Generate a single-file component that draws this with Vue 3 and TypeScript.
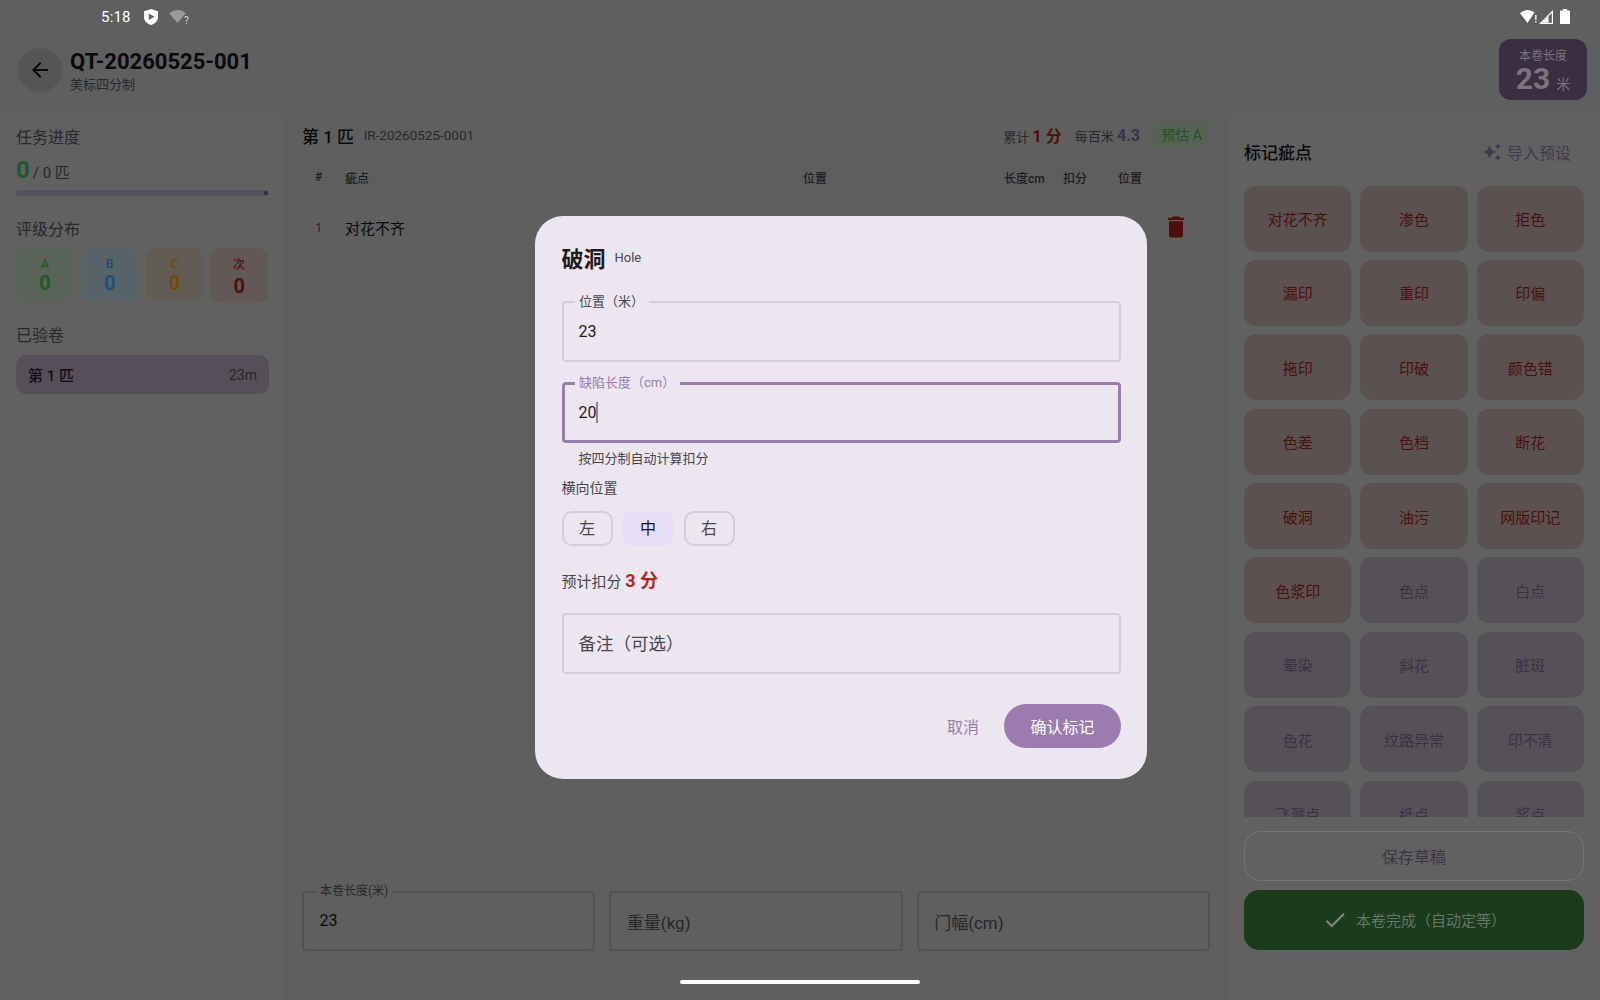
<script setup lang="ts">
interface Defect {
  name: string
  severe: boolean
}

const names: string[] = [
  '对花不齐', '渗色', '拒色', '漏印', '重印', '印偏', '拖印', '印破', '颜色错',
  '色差', '色档', '断花', '破洞', '油污', '网版印记', '色浆印', '色点', '白点',
  '晕染', '斜花', '脏斑', '色花', '纹路异常', '印不清', '飞溅点', '纸点', '浆点',
]
const defects: Defect[] = names.map((name, i) => ({ name, severe: i < 16 }))

const grades = [
  { label: 'A', cls: 'a' },
  { label: 'B', cls: 'b' },
  { label: 'C', cls: 'c' },
  { label: '次', cls: 'd' },
]
const sides = ['左', '中', '右']
</script>

<template>
  <div class="screen">
    <div class="status">
      <div class="status-left">
        <span class="time">5:18</span>
        <svg class="shield" viewBox="0 0 14 16"><path d="M7 0L14 2.200V8c0 3.800-3 6.800-7 8-4-1.200-7-4.200-7-8V2.200z" fill="#fff" /><path d="M4.800 4.500v6.600L10.500 7.800z" fill="#636363" /></svg>
        <span class="wifi-q">
          <svg viewBox="0 0 18 14"><path d="M0 3.500C2.400 1.300 5.500 0 9 0s6.600 1.300 9 3.500L9 14z" fill="#9a9a9a" /></svg>
          <i>?</i>
        </span>
      </div>
      <div class="status-right">
        <svg class="wifi" viewBox="0 0 17 13"><path d="M0 3.200C2.100 1.200 4.900 0 7.500 0c2.600 0 5 .9 7 2.400L7.500 13z" fill="#fff" /><path d="M15.200 5h1.300v5h-1.300zM15.200 11h1.300v1.500h-1.300z" fill="#fff" /></svg>
        <svg class="signal" viewBox="0 0 14 14"><path d="M14 0v14H0zM12.800 3L3 12.800h9.800z" fill="#fff" /><path d="M9.500 6.300v6.500H3z" fill="#fff" /></svg>
        <svg class="battery" viewBox="0 0 10 15"><path d="M3 0h4v1.500h2c.6 0 1 .4 1 1V14c0 .6-.4 1-1 1H1c-.6 0-1-.4-1-1V2.500c0-.6.4-1 1-1h2z" fill="#fff" /></svg>
      </div>
    </div>

    <header class="header">
      <button class="back">
        <svg viewBox="0 0 24 24"><path d="M20 11H7.830l5.590-5.590L12 4l-8 8 8 8 1.410-1.410L7.830 13H20v-2z" /></svg>
      </button>
      <div class="titles">
        <div class="title">QT-20260525-001</div>
        <div class="subtitle">美标四分制</div>
      </div>
      <div class="length-badge">
        <div class="length-label">本卷长度</div>
        <div class="length-value"><b>23</b><span>米</span></div>
      </div>
    </header>

    <main class="body">
      <aside class="left">
        <div class="section-title">任务进度</div>
        <div class="progress-text"><b>0</b><span>/ 0 匹</span></div>
        <div class="track"><i></i></div>
        <div class="section-title grade-title">评级分布</div>
        <div class="grades">
          <div v-for="g in grades" :key="g.label" class="grade" :class="g.cls">
            <span>{{ g.label }}</span>
            <b>0</b>
          </div>
        </div>
        <div class="section-title roll-title">已验卷</div>
        <div class="roll">
          <b>第 1 匹</b>
          <span>23m</span>
        </div>
      </aside>

      <section class="center">
        <div class="roll-head">
          <b class="roll-name">第 1 匹</b>
          <span class="roll-id">IR-20260525-0001</span>
          <div class="summary">
            <span>累计 <b class="red">1 分</b></span>
            <span>每百米 <b class="purple">4.3</b></span>
            <span class="pill">预估 A</span>
          </div>
        </div>
        <div class="row thead">
          <span class="c-no">#</span>
          <span class="c-name">疵点</span>
          <span class="c-pos">位置</span>
          <span class="c-len">长度cm</span>
          <span class="c-score">扣分</span>
          <span class="c-side">位置</span>
          <span class="c-del"></span>
        </div>
        <div class="row tbody">
          <span class="c-no">1</span>
          <span class="c-name">对花不齐</span>
          <span class="c-pos"></span>
          <span class="c-len"></span>
          <span class="c-score"></span>
          <span class="c-side"></span>
          <span class="c-del">
            <svg viewBox="0 0 24 24"><path d="M6 19c0 1.100.9 2 2 2h8c1.100 0 2-.9 2-2V7H6v12zM19 4h-3.500l-1-1h-5l-1 1H5v2h14V4z" /></svg>
          </span>
        </div>
        <div class="spacer"></div>
        <div class="bottom-fields">
          <div class="dim-field">
            <label>本卷长度(米)</label>
            <span class="dim-value">23</span>
          </div>
          <div class="dim-field"><span class="dim-hint">重量(kg)</span></div>
          <div class="dim-field"><span class="dim-hint">门幅(cm)</span></div>
        </div>
      </section>

      <aside class="right">
        <div class="right-head">
          <b>标记疵点</b>
          <span class="preset">
            <svg viewBox="0 0 24 24"><path d="M19 9l1.250-2.750L23 5l-2.750-1.250L19 1l-1.250 2.750L15 5l2.750 1.250L19 9zm-7.500.5L9 4 6.500 9.500 1 12l5.500 2.500L9 20l2.500-5.500L17 12l-5.500-2.500zM19 15l-1.250 2.750L15 19l2.750 1.250L19 23l1.250-2.750L23 19l-2.750-1.250L19 15z" /></svg>
            导入预设
          </span>
        </div>
        <div class="defects">
          <div v-for="d in defects" :key="d.name" class="defect" :class="{ severe: d.severe }">{{ d.name }}</div>
        </div>
        <button class="save">保存草稿</button>
        <button class="finish">
          <svg viewBox="0 0 24 24"><path d="M9 16.170L4.830 12l-1.420 1.410L9 19 21 7l-1.410-1.410z" /></svg>
          本卷完成（自动定等）
        </button>
      </aside>
    </main>

    <div class="home"></div>

    <div class="overlay">
      <div class="dialog">
        <div class="dialog-title"><b>破洞</b><span>Hole</span></div>
        <div class="field first">
          <label>位置（米）</label>
          <span>23</span>
        </div>
        <div class="field focused">
          <label>缺陷长度（cm）</label>
          <span>20<i class="caret"></i></span>
        </div>
        <div class="helper">按四分制自动计算扣分</div>
        <div class="side-label">横向位置</div>
        <div class="sides">
          <div v-for="s in sides" :key="s" class="side" :class="{ active: s === '中' }">{{ s }}</div>
        </div>
        <div class="estimate">预计扣分 <b>3 分</b></div>
        <div class="field note"><span>备注（可选）</span></div>
        <div class="actions">
          <button class="cancel">取消</button>
          <button class="confirm">确认标记</button>
        </div>
      </div>
    </div>
  </div>
</template>

<style scoped>
.screen {
  position: relative;
  width: 1600px;
  height: 1000px;
  overflow: hidden;
  display: flex;
  flex-direction: column;
  background: #5f5f60;
  color: #0a090b;
  font-family: Roboto, "Noto Sans CJK SC", sans-serif;
}

.status {
  height: 36px;
  flex: none;
  display: flex;
  justify-content: space-between;
  align-items: center;
  padding: 0 30px 3px 101px;
  color: #fff;
  box-sizing: border-box;
}

.status-left,
.status-right {
  display: flex;
  align-items: center;
}

.time {
  font-size: 15px;
  letter-spacing: 0.2px;
}

.shield {
  width: 14px;
  height: 16px;
  margin-left: 13px;
}

.wifi-q {
  position: relative;
  margin-left: 11px;
  display: flex;
}

.wifi-q svg {
  width: 17px;
  height: 13px;
}

.wifi-q i {
  position: absolute;
  right: -3px;
  bottom: -3px;
  font-size: 10px;
  font-style: normal;
  color: #d8d8d8;
}

.wifi {
  width: 17px;
  height: 13px;
}

.signal {
  width: 14px;
  height: 14px;
  margin-left: 2px;
}

.battery {
  width: 10px;
  height: 15px;
  margin-left: 7px;
}

.header {
  height: 76px;
  flex: none;
  display: flex;
  align-items: flex-start;
  padding: 0 13px 0 18px;
}

.back {
  width: 44px;
  height: 44px;
  border: none;
  border-radius: 50%;
  background: #555556;
  padding: 10px;
  margin-top: 12px;
}

.back svg {
  display: block;
  fill: #0a090b;
}

.titles {
  margin-left: 8px;
  flex: 1;
  margin-top: 13px;
}

.title {
  font-size: 22px;
  line-height: 26px;
  font-weight: 700;
}

.subtitle {
  font-size: 13px;
  line-height: 20px;
  color: #28272b;
}

.length-badge {
  width: 88px;
  height: 61px;
  margin-top: 3px;
  border-radius: 12px;
  background: #3b2d42;
  display: flex;
  flex-direction: column;
  align-items: center;
  padding-top: 9px;
  box-sizing: border-box;
  color: #7b747f;
}

.length-label {
  font-size: 12px;
  line-height: 16px;
}

.length-value {
  display: flex;
  align-items: baseline;
  line-height: 30px;
}

.length-value b {
  font-size: 30px;
}

.length-value span {
  font-size: 14px;
  margin-left: 6px;
}

.body {
  flex: 1;
  display: flex;
  min-height: 0;
}

.left {
  width: 284px;
  flex: none;
  box-sizing: border-box;
  padding: 16px 16px 0;
  background: #616162;
  border-radius: 0 12px 0 0;
}

.section-title {
  font-size: 16px;
  line-height: 20px;
  color: #28272b;
}

.progress-text {
  margin-top: 8px;
  height: 28px;
  display: flex;
  align-items: baseline;
  color: #28272b;
  font-size: 15px;
}

.progress-text b {
  font-size: 24px;
  line-height: 28px;
  color: #1e5a22;
}

.progress-text span {
  margin-left: 3px;
}

.track {
  position: relative;
  width: 253px;
  height: 6px;
  margin-top: 6px;
  border-radius: 3px;
  background: #564f5e;
}

.track i {
  position: absolute;
  right: 1px;
  top: 1px;
  width: 4px;
  height: 4px;
  border-radius: 50%;
  background: #352a40;
}

.grade-title {
  margin-top: 24px;
}

.grades {
  display: flex;
  align-items: flex-start;
  gap: 7px;
  margin-top: 8px;
}

.grade {
  width: 58px;
  height: 53px;
  border-radius: 10px;
  display: flex;
  flex-direction: column;
  align-items: center;
  box-sizing: border-box;
  padding-top: 8px;
}

.grade span {
  font-size: 12px;
  line-height: 16px;
  font-weight: 500;
}

.grade b {
  font-size: 20px;
  line-height: 22px;
}

.grade.a {
  background: #5a635a;
  color: #1e5a22;
}

.grade.b {
  background: #586269;
  color: #18507e;
}

.grade.c {
  background: #635c54;
  color: #784904;
}

.grade.d {
  height: 55px;
  background: #625856;
  color: #50100d;
}

.grade.d span {
  line-height: 18px;
}

.grade.d b {
  line-height: 24px;
}

.roll-title {
  margin-top: 23px;
}

.roll {
  display: flex;
  justify-content: space-between;
  align-items: center;
  width: 253px;
  height: 39px;
  margin-top: 9px;
  box-sizing: border-box;
  padding: 0 12px;
  border-radius: 10px;
  background: #564e58;
}

.roll b {
  font-size: 15px;
  font-weight: 500;
  color: #120c18;
}

.roll span {
  font-size: 14px;
  color: #28272b;
}

.center {
  flex: 1;
  min-width: 0;
  display: flex;
  flex-direction: column;
  padding: 10px 18px 0 18px;
  background: #5f5f60;
}

.roll-head {
  height: 26px;
  display: flex;
  align-items: center;
}

.roll-name {
  font-size: 17px;
  font-weight: 500;
}

.roll-id {
  margin-left: 9.500px;
  font-size: 13.500px;
  color: #28272b;
}

.summary {
  margin-left: auto;
  display: flex;
  align-items: center;
  gap: 13px;
  font-size: 13px;
  color: #28272b;
}

.summary b {
  font-size: 16px;
  font-weight: 700;
}

.red {
  color: #4e0f0c;
}

.purple {
  color: #3d304d;
}

.pill {
  width: 57px;
  height: 26px;
  border-radius: 7px;
  background: #576257;
  color: #1d5421;
  font-size: 14px;
  line-height: 26px;
  text-align: center;
}

.row {
  display: flex;
  align-items: center;
}

.thead {
  height: 24px;
  margin-top: 17px;
  border-radius: 6px;
  font-size: 12px;
  font-weight: 500;
  color: #1c1b1f;
  background: #5e5e5f;
}

.tbody {
  height: 60px;
  margin-top: 8px;
  font-size: 15px;
}

.c-no {
  width: 43px;
  padding-left: 13px;
  box-sizing: border-box;
}

.tbody .c-no {
  font-size: 13px;
  color: #28272b;
}

.c-name {
  width: 458px;
}

.c-pos {
  width: 201px;
}

.c-len {
  width: 59px;
}

.c-score {
  width: 55px;
}

.c-side {
  width: 44px;
}

.c-del svg {
  display: block;
  width: 28px;
  height: 28px;
  fill: #4e0f0c;
}

.spacer {
  flex: 1;
}

.bottom-fields {
  display: flex;
  gap: 14px;
  margin-bottom: 49px;
}

.dim-field {
  position: relative;
  flex: 1;
  height: 60px;
  box-sizing: border-box;
  border: 2px solid #525253;
  border-radius: 4px;
  display: flex;
  align-items: center;
  padding: 0 15.500px;
}

.dim-field label {
  position: absolute;
  left: 12px;
  top: -10px;
  padding: 0 4px;
  font-size: 12px;
  line-height: 16px;
  background: #5f5f60;
  color: #28272b;
}

.dim-value {
  font-size: 16px;
  margin-top: -2px;
}

.dim-hint {
  font-size: 17px;
  color: #28272b;
}

.right {
  width: 372px;
  flex: none;
  box-sizing: border-box;
  padding: 0 16px;
  background: #616162;
  border-radius: 12px 0 0 0;
  display: flex;
  flex-direction: column;
}

.right-head {
  height: 73.500px;
  flex: none;
  display: flex;
  justify-content: space-between;
  align-items: center;
  padding: 6px 13px 0 0;
  box-sizing: border-box;
}

.right-head b {
  font-size: 17px;
  font-weight: 500;
}

.preset {
  display: flex;
  align-items: center;
  gap: 5px;
  font-size: 16px;
  color: #43394d;
}

.preset svg {
  width: 20px;
  height: 20px;
  fill: #43394d;
}

.defects {
  height: 631.500px;
  overflow: hidden;
  display: grid;
  grid-template-columns: repeat(3, 1fr);
  grid-auto-rows: 66px;
  gap: 8.400px 9px;
  flex: none;
}

.defect {
  border-radius: 12px;
  background: #565159;
  color: #3a3143;
  font-size: 15px;
  display: flex;
  align-items: center;
  justify-content: center;
}

.defect.severe {
  background: #5b5150;
  color: #4a100d;
}

.save {
  height: 50px;
  margin-top: 14px;
  flex: none;
  border: 1.500px solid #757577;
  border-radius: 16px;
  background: transparent;
  font: inherit;
  font-size: 16px;
  color: #3e3344;
}

.finish {
  height: 59.500px;
  margin-top: 9px;
  flex: none;
  border: none;
  border-radius: 15px;
  background: #1a3b1c;
  color: #687569;
  font: inherit;
  font-size: 15px;
  display: flex;
  align-items: center;
  justify-content: center;
  gap: 8px;
}

.finish svg {
  width: 26px;
  height: 26px;
  fill: #7c877d;
}

.home {
  position: absolute;
  left: 680px;
  bottom: 16px;
  width: 240px;
  height: 4px;
  border-radius: 2px;
  background: #fff;
}

.overlay {
  position: absolute;
  inset: 0;
  display: flex;
  justify-content: flex-start;
  align-items: flex-start;
  padding: 216px 0 0 535px;
  box-sizing: border-box;
}

.dialog {
  width: 612px;
  height: 563px;
  box-sizing: border-box;
  padding: 21px 26px 0 26.500px;
  border-radius: 28px;
  background: #ece6f0;
  color: #1d1b20;
  display: flex;
  flex-direction: column;
}

.dialog-title {
  display: flex;
  align-items: center;
  height: 40px;
}

.dialog-title b {
  font-size: 22px;
  font-weight: 700;
}

.dialog-title span {
  margin: 1px 0 0 9px;
  font-size: 13px;
  color: #49454f;
}

.field {
  position: relative;
  height: 61px;
  margin-top: 20px;
  box-sizing: border-box;
  border: 2px solid #d4ced9;
  border-radius: 4px;
  padding: 0 15px;
  display: flex;
  align-items: center;
  font-size: 16px;
}

.field.first {
  margin-top: 24px;
}

.field label {
  position: absolute;
  left: 11px;
  top: -9px;
  padding: 0 4.500px;
  font-size: 13px;
  line-height: 16px;
  background: #ece6f0;
  color: #49454f;
}

.field.focused {
  border: 3px solid #9c7bae;
}

.field.focused label {
  color: #9c7bae;
  left: 10px;
  top: -10.500px;
}

.field.focused span {
  margin-left: -1px;
}

.caret {
  display: inline-block;
  width: 2px;
  height: 21px;
  vertical-align: -5px;
  background: #9c7bae;
}

.helper {
  margin: 7px 0 0 17px;
  font-size: 13px;
  line-height: 17px;
  color: #49454f;
}

.side-label {
  margin-top: 11px;
  font-size: 14px;
  line-height: 20px;
  color: #49454f;
}

.sides {
  display: flex;
  gap: 10px;
  margin-top: 13px;
}

.side {
  width: 51px;
  height: 35px;
  box-sizing: border-box;
  border: 2px solid #d4ced9;
  border-radius: 10px;
  font-size: 16px;
  line-height: 32px;
  text-align: center;
  color: #49454f;
}

.side.active {
  border-color: transparent;
  background: #e8def8;
  color: #1d192b;
}

.estimate {
  margin-top: 23px;
  height: 24px;
  font-size: 15px;
  line-height: 24px;
  color: #49454f;
}

.estimate b {
  font-size: 18px;
  font-weight: 700;
  color: #b3261e;
}

.field.note {
  margin-top: 20px;
  color: #49454f;
  font-size: 17.500px;
  padding-bottom: 2px;
}

.actions {
  display: flex;
  justify-content: flex-end;
  align-items: center;
  gap: 25px;
  margin-top: 30px;
}

.cancel {
  border: none;
  background: transparent;
  padding: 0;
  font: inherit;
  font-size: 16px;
  color: #9c7bae;
}

.confirm {
  width: 117px;
  height: 44px;
  border: none;
  border-radius: 22px;
  background: #9c7bae;
  color: #fff;
  font: inherit;
  font-size: 16px;
}
</style>

<style>
html,
body {
  margin: 0;
  background: #5f5f60;
}
</style>
